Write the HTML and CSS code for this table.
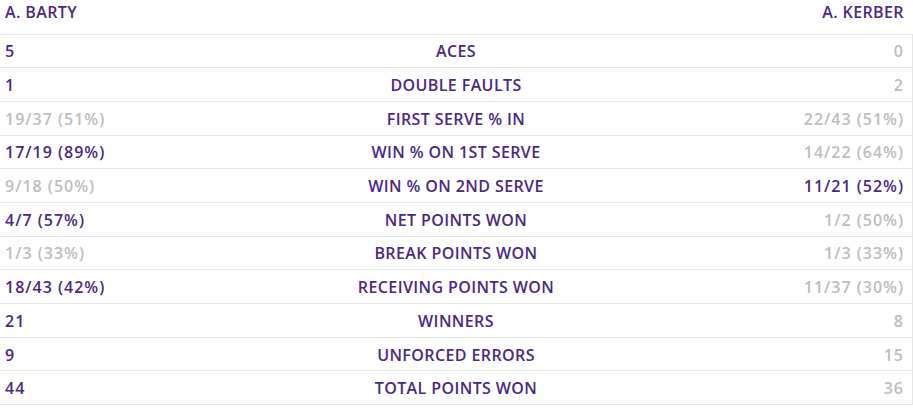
FILE: index.html
```html
<!DOCTYPE html>
<html lang="en">
<head>
<meta charset="utf-8">
<title>Match Stats</title>
<link rel="stylesheet" href="styles.css">
</head>
<body>
<div class="stats">
  <div class="row head">
    <div class="cell left win">A. BARTY</div>
    <div class="cell mid"></div>
    <div class="cell right win">A. KERBER</div>
  </div>
  <div class="row"><div class="cell left num win">5</div><div class="cell mid">ACES</div><div class="cell right num">0</div></div>
  <div class="row"><div class="cell left num win">1</div><div class="cell mid">DOUBLE FAULTS</div><div class="cell right num">2</div></div>
  <div class="row"><div class="cell left num">19/37 (51%)</div><div class="cell mid">FIRST SERVE % IN</div><div class="cell right num">22/43 (51%)</div></div>
  <div class="row"><div class="cell left num win">17/19 (89%)</div><div class="cell mid">WIN % ON 1ST SERVE</div><div class="cell right num">14/22 (64%)</div></div>
  <div class="row"><div class="cell left num">9/18 (50%)</div><div class="cell mid">WIN % ON 2ND SERVE</div><div class="cell right num win">11/21 (52%)</div></div>
  <div class="row"><div class="cell left num win">4/7 (57%)</div><div class="cell mid">NET POINTS WON</div><div class="cell right num">1/2 (50%)</div></div>
  <div class="row"><div class="cell left num">1/3 (33%)</div><div class="cell mid">BREAK POINTS WON</div><div class="cell right num">1/3 (33%)</div></div>
  <div class="row"><div class="cell left num win">18/43 (42%)</div><div class="cell mid">RECEIVING POINTS WON</div><div class="cell right num">11/37 (30%)</div></div>
  <div class="row"><div class="cell left num win">21</div><div class="cell mid">WINNERS</div><div class="cell right num">8</div></div>
  <div class="row"><div class="cell left num win">9</div><div class="cell mid">UNFORCED ERRORS</div><div class="cell right num">15</div></div>
  <div class="row"><div class="cell left num win">44</div><div class="cell mid">TOTAL POINTS WON</div><div class="cell right num">36</div></div>
</div>
</body>
</html>
```
FILE: styles.css
```css
html, body {
  margin: 0;
  padding: 0;
  background: #ffffff;
}
body {
  font-family: "Open Sans", "DejaVu Sans", sans-serif;
  font-weight: 600;
  font-size: 16px;
  letter-spacing: 0.4px;
  color: #bdbdbd;
}
.stats {
  width: 913px;
  display: flex;
  flex-direction: column;
}
.row {
  display: grid;
  grid-template-columns: 1fr 1fr 1fr;
  align-items: center;
  height: 33.7px;
  padding-top: 1px;
  box-sizing: border-box;
  border-bottom: 1px solid #e6e6e6;
  border-right: 1px solid #e6e6e6;
}
.row.head {
  height: 34.5px;
  align-items: start;
  padding-top: 1px;
  border-right: none;
}
.cell {
  white-space: nowrap;
}
.num {
  letter-spacing: 1px;
}
.left {
  padding-left: 5px;
}
.mid {
  text-align: center;
  color: #4a2883;
}
.right {
  text-align: right;
  padding-right: 8px;
}
.head .right {
  padding-right: 9px;
}
.win {
  color: #4a2883;
}
```
